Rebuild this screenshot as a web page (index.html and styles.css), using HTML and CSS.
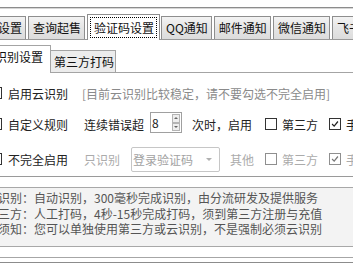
FILE: index.html
```html
<!DOCTYPE html>
<html>
<head>
<meta charset="utf-8">
<link rel="stylesheet" href="styles.css">
</head>
<body>
<div class="win">
  <div class="frame-top"></div>
  <div class="tabs">
    <div class="tab first">设置</div>
    <div class="tab">查询起售</div>
    <div class="tab active"><span class="focus">验证码设置</span></div>
    <div class="tab">QQ通知</div>
    <div class="tab">邮件通知</div>
    <div class="tab">微信通知</div>
    <div class="tab">飞书通知</div>
  </div>
  <div class="subtabs">
    <div class="subtab active">识别设置</div>
    <div class="subtab">第三方打码</div>
  </div>
  <div class="panel">
    <div class="opt"><span class="cb"></span>启用云识别</div>
    <div class="note">[目前云识别比较稳定，请不要勾选不完全启用]</div>

    <div class="opt"><span class="cb"></span>自定义规则</div>
    <div class="mid">
      <span>连续错误超</span>
      <span class="spin"><span class="val">8</span><span class="btns"><span class="sb up"></span><span class="sb down"></span></span></span>
      <span class="after-spin">次时，启用</span>
    </div>
    <div class="tail">
      <span class="cb"></span><span class="lbl">第三方</span>
      <span class="cb checked"><svg viewBox="0 0 12 12" width="12" height="12"><polyline points="2.5,6 5,8.5 9.5,3" fill="none" stroke="#222" stroke-width="1.5"/></svg></span><span class="lbl">手动打码</span>
    </div>

    <div class="opt"><span class="cb"></span>不完全启用</div>
    <div class="mid dis">
      <span>只识别</span>
      <span class="select"><span class="sel-text">登录验证码</span><span class="arrow"></span></span>
      <span class="other">其他</span>
    </div>
    <div class="tail dis">
      <span class="cb"></span><span class="lbl">第三方</span>
      <span class="cb checked"><svg viewBox="0 0 12 12" width="12" height="12"><polyline points="2.5,6 5,8.5 9.5,3" fill="none" stroke="#777" stroke-width="1.5"/></svg></span><span class="lbl">手动打码</span>
    </div>
  </div>
  <div class="info">
    <p>识别：自动识别，300毫秒完成识别，由分流研发及提供服务</p>
    <p>三方：人工打码，4秒-15秒完成打码，须到第三方注册与充值</p>
    <p>须知：您可以单独使用第三方或云识别，不是强制必须云识别</p>
  </div>
  <div class="bottom-lines"></div>
</div>
</body>
</html>
```

FILE: styles.css
```css
html, body {
  margin: 0;
  padding: 0;
  background: #fff;
  overflow: hidden;
}
.win {
  width: 353px;
  height: 264px;
  overflow: hidden;
  font-family: "Noto Sans CJK SC", "Noto Sans", sans-serif;
  font-size: 12px;
  color: #222;
}
.frame-top {
  height: 7px;
  border-bottom: 1px solid #8c8c8c;
  box-shadow: 0 1px 0 #d6d6d6;
}
.tabs {
  display: flex;
  align-items: flex-end;
  height: 31px;
  border-bottom: 1px solid #9a9a9a;
  white-space: nowrap;
}
.tab {
  flex: none;
  height: 22px;
  line-height: 22px;
  padding: 0 3px 0 4px;
  margin-right: 2px;
  border: 1px solid #8e8e8e;
  border-bottom: none;
  background: linear-gradient(#f3f3f3, #e6e6e6 45%, #dcdcdc);
  color: #111;
}
.tab.first {
  margin-left: -8px;
  padding-left: 5px;
}
.tab.active {
  height: 25px;
  margin-bottom: -1px;
  padding: 0 2px;
  margin-right: 1px;
  background: #fff;
  display: flex;
  align-items: flex-start;
}
.focus {
  margin-top: 2px;
  height: 19px;
  line-height: 19px;
  padding: 0 2px 0 3px;
  border: 1px dotted #000;
}
.subtabs {
  display: flex;
  align-items: flex-end;
  height: 32px;
  border-bottom: 1px solid #a4a4a4;
  white-space: nowrap;
}
.subtab {
  flex: none;
  height: 21px;
  line-height: 21px;
  padding: 0 1px 0 3px;
  border: 1px solid #a4a4a4;
  border-bottom: none;
  background: #ececec;
  color: #111;
}
.subtab.active {
  height: 22px;
  line-height: 22px;
  padding: 0 7px 5px 4px;
  margin-left: -10px;
  margin-bottom: -1px;
  background: #fff;
  position: relative;
  z-index: 1;
}
.subtab.active + .subtab {
  border-left: none;
}
.panel {
  display: grid;
  grid-template-columns: 84px 181px auto;
  grid-template-rows: 26px 36px 34px;
  align-items: center;
  padding-top: 7px;
  border-bottom: 1px solid #9a9a9a;
  margin-bottom: 10px;
  white-space: nowrap;
}
.opt {
  display: flex;
  align-items: center;
  margin-left: -10px;
  color: #222;
}
.opt .cb {
  margin-right: 6px;
}
.cb {
  flex: none;
  box-sizing: border-box;
  width: 12px;
  height: 12px;
  border: 1px solid #333;
  background: #fff;
  display: inline-flex;
  align-items: center;
  justify-content: center;
}
.cb svg {
  display: block;
  width: 10px;
  height: 10px;
}
.note {
  grid-column: 2 / 4;
  margin-left: -2px;
  color: #8a8a8a;
}
.mid {
  display: flex;
  align-items: center;
}
.spin {
  box-sizing: border-box;
  width: 32px;
  height: 21px;
  margin-left: 6px;
  border: 1px solid #a0a0a0;
  display: flex;
  margin-top: -3px;
}
.spin .val {
  flex: 1;
  padding-left: 1px;
  line-height: 19px;
  color: #222;
}
.spin .btns {
  width: 8px;
  display: flex;
  flex-direction: column;
  padding: 1px 1px 1px 0;
}
.sb {
  flex: 1;
  border: 1px solid #b4b4b4;
  background: #eeeeee;
  display: flex;
  align-items: center;
  justify-content: center;
}
.sb::after {
  content: "";
  width: 0;
  height: 0;
  border-left: 2px solid transparent;
  border-right: 2px solid transparent;
}
.sb.up::after {
  border-bottom: 2px solid #666;
}
.sb.down::after {
  border-top: 2px solid #666;
}
.after-spin {
  margin-left: 10px;
}
.tail {
  display: flex;
  align-items: center;
}
.tail .lbl {
  margin-left: 5px;
  margin-right: 11px;
}
.dis {
  color: #ababab;
}
.tail.dis .cb {
  border-color: #8f8f8f;
}
.select {
  box-sizing: border-box;
  width: 89px;
  height: 25px;
  margin-left: 11px;
  border: 1px solid #c6c6c6;
  border-radius: 2px;
  display: flex;
  align-items: center;
  padding-left: 1px;
  color: #a2a2a2;
}
.sel-text {
  flex: 1;
}
.arrow {
  width: 0;
  height: 0;
  border-left: 3px solid transparent;
  border-right: 3px solid transparent;
  border-top: 3px solid #b0b0b0;
  margin-right: 7px;
}
.other {
  margin-left: 10px;
}
.info {
  margin: 0 -6px;
  padding: 2px 0 9px 3px;
  height: 46.5px;
  border: 1px solid #a8a8a8;
  background: #f3f3f3;
  color: #555;
  white-space: nowrap;
}
.info p {
  margin: 0;
  line-height: 15.5px;
}
.bottom-lines {
  margin-top: 10px;
  height: 4px;
  border-top: 1px solid #a6a6a6;
  border-bottom: 1px solid #8c8c8c;
}
```
